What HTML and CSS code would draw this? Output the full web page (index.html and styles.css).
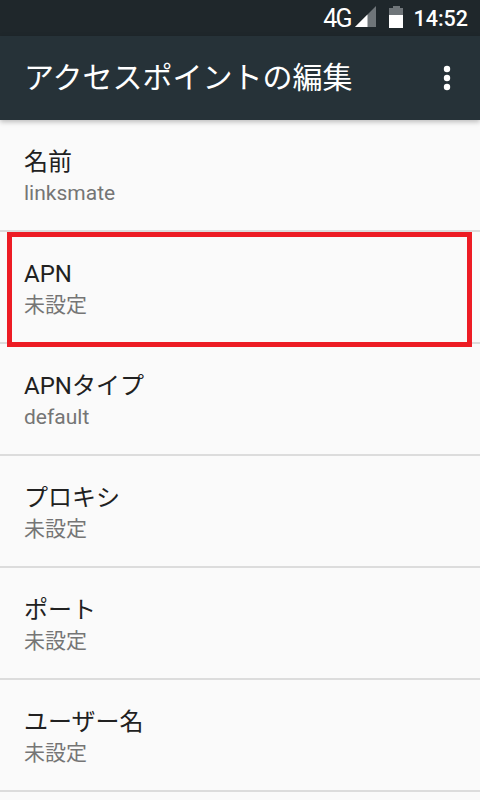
FILE: index.html
```html
<!DOCTYPE html>
<html lang="ja">
<head>
<meta charset="utf-8">
<title>アクセスポイントの編集</title>
<link rel="stylesheet" href="styles.css">
</head>
<body>
<div class="screen">
  <div class="status">
    <span class="net">4G</span>
    <svg class="signal" width="21" height="21" viewBox="0 0 21 21"><path d="M21 0V21H0Z" fill="#6f7579"/><path d="M12.5 8.5V21H0Z" fill="#fff"/></svg>
    <svg class="battery" width="14" height="22" viewBox="0 0 14 22"><path d="M4 0H11V2H14V22H0V2H4Z" fill="#6f7579"/><path d="M0 9H14V22H0Z" fill="#fff"/></svg>
    <span class="time">14:52</span>
  </div>
  <header class="bar">
    <h1 class="title">アクセスポイントの編集</h1>
    <svg class="more" width="8" height="26" viewBox="0 0 8 26"><circle cx="4" cy="4" r="3.2" fill="#fff"/><circle cx="4" cy="13" r="3.2" fill="#fff"/><circle cx="4" cy="22" r="3.2" fill="#fff"/></svg>
  </header>
  <main class="list">
    <div class="row"><div class="name">名前</div><div class="val">linksmate</div></div>
    <div class="row"><div class="name">APN</div><div class="val">未設定</div></div>
    <div class="row"><div class="name">APNタイプ</div><div class="val">default</div></div>
    <div class="row"><div class="name">プロキシ</div><div class="val">未設定</div></div>
    <div class="row"><div class="name">ポート</div><div class="val">未設定</div></div>
    <div class="row"><div class="name">ユーザー名</div><div class="val">未設定</div></div>
  </main>
  <div class="mark"></div>
</div>
</body>
</html>
```
FILE: styles.css
```css
* { box-sizing: border-box; margin: 0; padding: 0; }
html, body { width: 480px; height: 800px; overflow: hidden; }
body { background: #fafafa; font-family: Roboto, "Noto Sans CJK JP", sans-serif; }
.screen { position: relative; width: 480px; height: 800px; overflow: hidden; }
.status { height: 36px; background: #1f272b; color: #fff; display: flex; align-items: center; justify-content: flex-end; padding-right: 12px; }
.net { font-size: 25px; letter-spacing: -2px; margin-right: 5px; }
.signal { margin-right: 13px; margin-top: -3px; }
.battery { margin-right: 10px; margin-top: -2px; }
.time { font-size: 21.5px; font-weight: 500; }
.bar { position: relative; z-index: 1; height: 84px; background: #263238; color: #fff; display: flex; align-items: center; justify-content: space-between; padding: 0 29px 0 24px; box-shadow: 0 2px 5px rgba(0,0,0,.25); }
.title { font-size: 30px; font-weight: 400; line-height: 84px; }
.list { display: flex; flex-direction: column; }
.row { height: 112px; border-bottom: 2px solid #dcdcdc; padding: 26px 24px 0; }
.name { font-size: 24px; line-height: 32px; color: #212121; }
.val { font-size: 21px; line-height: 31px; color: #757575; }
.mark { position: absolute; left: 7px; top: 232px; width: 465px; height: 115px; border: 5px solid #ed1c24; }
```
